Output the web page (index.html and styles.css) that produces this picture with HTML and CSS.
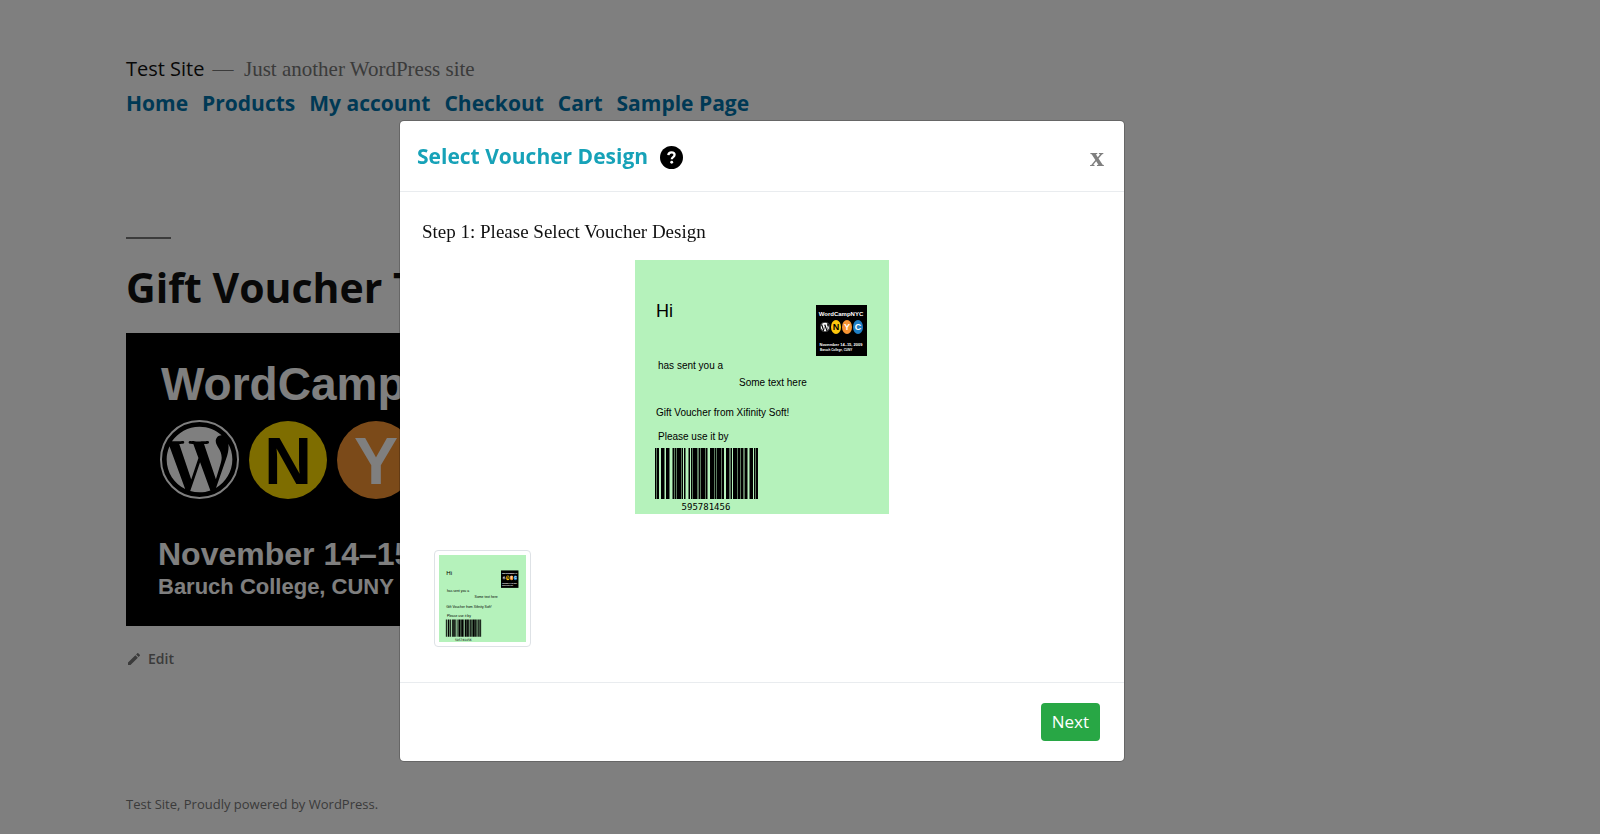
FILE: index.html
```
<!DOCTYPE html>
<html lang="en">
<head>
<meta charset="UTF-8">
<meta name="viewport" content="width=device-width, initial-scale=1">
<title>Gift Voucher Test - Test Site</title>
<link rel="stylesheet" href="styles.css">
</head>
<body>

<svg class="defs" aria-hidden="true">
	<symbol id="wp" viewBox="0 0 24 24">
		<circle cx="12" cy="12" r="11.7" fill="none" stroke="#fff" stroke-width=".6"/>
		<path fill="#fff" transform="translate(.9 .9) scale(.925)" d="M21.469 6.825c.84 1.537 1.318 3.3 1.318 5.175 0 3.979-2.156 7.456-5.363 9.325l3.295-9.527c.615-1.54.82-2.771.82-3.864 0-.405-.026-.78-.07-1.11m-7.981.105c.647-.03 1.232-.105 1.232-.105.582-.075.514-.93-.067-.899 0 0-1.755.135-2.88.135-1.064 0-2.85-.15-2.85-.15-.585-.03-.661.855-.075.885 0 0 .54.061 1.125.09l1.68 4.605-2.37 7.08L5.354 6.9c.649-.03 1.234-.1 1.234-.1.585-.075.516-.93-.065-.896 0 0-1.746.138-2.874.138-.2 0-.438-.008-.69-.015C4.911 3.15 8.235 1.215 12 1.215c2.809 0 5.365 1.072 7.286 2.833-.046-.003-.091-.009-.141-.009-1.06 0-1.812.923-1.812 1.914 0 .89.513 1.643 1.06 2.531.411.72.89 1.643.89 2.977 0 .915-.354 1.994-.821 3.479l-1.075 3.585-3.9-11.61zM12 22.784c-1.059 0-2.081-.153-3.048-.437l3.237-9.406 3.315 9.087c.024.053.05.101.078.149-1.12.393-2.325.609-3.582.609M1.211 12c0-1.564.336-3.05.935-4.39L7.29 21.709C3.694 19.96 1.212 16.271 1.211 12"/>
	</symbol>

	<!-- voucher design, used for the preview and the thumbnail -->
	<symbol id="voucher" viewBox="0 0 254 254">
		<rect width="254" height="254" fill="#b5f2bb"/>
		<g class="v-text">
			<text class="v-name" x="21" y="57">Hi</text>
			<text x="23" y="109">has sent you a</text>
			<text x="104" y="126">Some text here</text>
			<text x="21" y="156">Gift Voucher from Xifinity Soft!</text>
			<text x="23" y="180">Please use it by</text>
		</g>
		<rect x="181" y="45" width="51" height="51"/>
		<g class="v-logo">
			<text x="206" y="56" font-size="6">WordCampNYC</text>
			<text x="206" y="86" font-size="4">November 14–15, 2009</text>
			<text class="v-place" x="185" y="91" font-size="3">Baruch College, CUNY</text>
		</g>
		<use href="#wp" x="185" y="62" width="10" height="10"/>
		<ellipse cx="201" cy="67" rx="5" ry="7" fill="#fdc70c"/>
		<ellipse cx="212" cy="67" rx="5" ry="7" fill="#f79433"/>
		<ellipse cx="223" cy="67" rx="5" ry="7" fill="#1f7fc4"/>
		<g class="v-logo" font-size="9">
			<text class="dark" x="201" y="70">N</text>
			<text x="212" y="70">Y</text>
			<text x="223" y="70">C</text>
		</g>
		<path d="M20 188h1.500v51h-1.500zM22 188h2v51h-2zM26 188h3.500v51h-3.500zM31 188h3.500v51h-3.500zM37.500 188h1.500v51h-1.500zM39.500 188h2v51h-2zM42 188h4v51h-4zM46.500 188h1.500v51h-1.500zM49 188h1.500v51h-1.500zM53.500 188h1.500v51h-1.500zM56 188h1.500v51h-1.500zM58 188h4.500v51h-4.500zM63.500 188h2v51h-2zM66 188h4.500v51h-4.500zM71 188h1.500v51h-1.500zM75 188h4.500v51h-4.500zM80 188h1.500v51h-1.500zM82 188h4.500v51h-4.500zM87 188h2v51h-2zM91 188h3.500v51h-3.500zM95.500 188h1.500v51h-1.500zM98 188h4.500v51h-4.500zM103 188h2v51h-2zM105.500 188h3v51h-3zM109.500 188h3v51h-3zM114.500 188h3.500v51h-3.500zM119 188h1.500v51h-1.500zM121 188h2v51h-2z"/>
		<text class="v-code" x="71" y="250">595781456</text>
	</symbol>
</svg>

<div id="page">
	<header class="site-header">
		<div class="site-branding">
			<p class="site-title"><a href="#">Test Site</a></p>
			<p class="site-description">—&nbsp; Just another WordPress site</p>
		</div>
		<nav class="main-navigation">
			<a href="#">Home</a>
			<a href="#">Products</a>
			<a href="#">My account</a>
			<a href="#">Checkout</a>
			<a href="#">Cart</a>
			<a href="#">Sample Page</a>
		</nav>
	</header>

	<main>
		<h1 class="entry-title">Gift Voucher Test</h1>
		<svg class="banner" viewBox="0 0 412 293" role="img" aria-label="WordCampNYC">
			<rect width="412" height="293"/>
			<g class="banner-text">
				<text x="35" y="67" font-size="46">WordCampNYC</text>
				<text x="32" y="232" font-size="32">November 14–15, 2009</text>
				<text x="32" y="261" font-size="22">Baruch College, CUNY</text>
			</g>
			<use href="#wp" x="34" y="87" width="79" height="79"/>
			<circle cx="162" cy="127" r="39" fill="#fddb00"/>
			<circle cx="250" cy="127" r="39" fill="#f79433"/>
			<circle cx="339" cy="127" r="39" fill="#1f7fc4"/>
			<g class="banner-round">
				<text class="dark" x="162" y="151">N</text>
				<text x="250" y="151">Y</text>
				<text x="339" y="151">C</text>
			</g>
		</svg>
		<a class="edit-link" href="#">
			<svg viewBox="0 0 24 24" width="16" height="16"><path fill="currentColor" d="M3 17.25V21h3.75L17.81 9.94l-3.75-3.75L3 17.25zM20.71 7.04a1 1 0 0 0 0-1.41l-2.34-2.34a1 1 0 0 0-1.41 0l-1.83 1.83 3.75 3.75 1.83-1.83z"/></svg>
			Edit
		</a>
	</main>

	<footer class="site-footer">
		<a href="#">Test Site</a>, <a href="#">Proudly powered by WordPress.</a>
	</footer>
</div>

<div class="modal-backdrop">
	<div class="modal" role="dialog" aria-modal="true" aria-labelledby="modal-title">
		<div class="modal-header">
			<h2 id="modal-title">Select Voucher Design</h2>
			<svg class="help" viewBox="0 0 24 24" width="23" height="23">
				<circle cx="12" cy="12" r="12"/>
				<path d="M8.7 9.4C8.9 7.5 10.2 6.6 12 6.6c1.9 0 3.2 1 3.2 2.6 0 2.4-2.9 2.3-2.9 4.5" fill="none" stroke="#fff" stroke-width="2.4"/>
				<circle cx="12.2" cy="17" r="1.5" fill="#fff"/>
			</svg>
			<button type="button" class="close" aria-label="Close">x</button>
		</div>
		<div class="modal-body">
			<p>Step 1: Please Select Voucher Design</p>
			<svg class="preview" viewBox="0 0 254 254"><use href="#voucher"/></svg>
			<button type="button" class="thumb" aria-label="Voucher design 1">
				<svg viewBox="0 0 254 254"><use href="#voucher"/></svg>
			</button>
		</div>
		<div class="modal-footer">
			<button type="button" class="btn-next">Next</button>
		</div>
	</div>
</div>

</body>
</html>
```
FILE: styles.css
```
* {
	box-sizing: border-box;
}

body {
	margin: 0;
	background: #fff;
	color: #111;
	font-family: "Open Sans", "Noto Sans", sans-serif;
	font-size: 21px;
}

a {
	text-decoration: none;
}

p, h1, h2 {
	margin: 0;
}

.defs {
	display: none;
}

#page {
	padding: 53px 126px 0;
}

/* header */
.site-branding {
	display: flex;
	align-items: baseline;
	gap: 8px;
	line-height: 32px;
}

.site-title {
	font-size: 20px;
}

.site-title a {
	color: #111;
}

.site-description {
	color: #767676;
	font-family: "Liberation Serif", serif;
}

.main-navigation {
	display: flex;
	gap: 14px;
	line-height: 36px;
	font-weight: 700;
}

.main-navigation a {
	color: #0073aa;
}

/* content */
.entry-title {
	margin-top: 116px;
	font-size: 41px;
	line-height: 60px;
}

.entry-title:before {
	content: "";
	display: block;
	width: 45px;
	height: 2px;
	margin-bottom: 18px;
	background: #767676;
}

.banner {
	display: block;
	width: 412px;
	margin-top: 16px;
}

.banner-text {
	fill: #fff;
	font-family: "Liberation Sans", Arial, sans-serif;
	font-weight: 700;
}

.banner-round {
	fill: #fff;
	font-family: "Liberation Sans", Arial, sans-serif;
	font-size: 66px;
	font-weight: 700;
	text-anchor: middle;
}

.dark {
	fill: #000;
}

.edit-link {
	display: flex;
	align-items: center;
	gap: 6px;
	margin-top: 21px;
	color: #767676;
	font-size: 14px;
	font-weight: 600;
	line-height: 24px;
}

.site-footer {
	margin-top: 121px;
	color: #767676;
	font-size: 13px;
	line-height: 24px;
}

.site-footer a {
	color: #767676;
}

/* modal */
.modal-backdrop {
	position: fixed;
	inset: 0;
	padding: 120px 0 0 25%;
	background: rgba(0, 0, 0, .5);
}

.modal {
	width: 726px;
	max-width: 95%;
	background: #fff;
	background-clip: padding-box;
	border: 1px solid rgba(0, 0, 0, .2);
	border-radius: 5px;
	margin-left: -1px;
}

.modal-header {
	display: flex;
	align-items: center;
	height: 71px;
	padding: 0 20px 0 17px;
	border-bottom: 1px solid #e9ecef;
}

.modal-header h2 {
	color: #17a2b8;
	font-size: 21px;
}

.help {
	margin: 2px 0 0 12px;
}

.close {
	margin: 2px 0 0 auto;
	padding: 0;
	border: 0;
	background: none;
	color: #7f7f7f;
	font: 700 28px "Liberation Serif", serif;
}

.modal-body {
	padding: 24px 22px 35px;
}

.modal-body p {
	font-family: "Liberation Serif", serif;
	font-size: 19px;
	line-height: 32px;
}

.preview {
	display: block;
	width: 254px;
	margin: 12px auto 36px;
}

.thumb {
	display: block;
	width: 97px;
	margin-left: 12px;
	padding: 4px;
	border: 1px solid #dee2e6;
	border-radius: 4px;
	background: #fff;
}

.thumb svg {
	display: block;
}

.v-text {
	font: 10px "Liberation Sans", Arial, sans-serif;
}

.v-name {
	font-size: 18px;
}

.v-logo {
	fill: #fff;
	font-family: "Liberation Sans", Arial, sans-serif;
	font-weight: 700;
	text-anchor: middle;
}

.v-logo .dark {
	fill: #000;
}

.v-place {
	text-anchor: start;
}

.v-code {
	font: 9px "DejaVu Sans Mono", monospace;
	text-anchor: middle;
}

.modal-footer {
	display: flex;
	justify-content: flex-end;
	padding: 20px 24px;
	border-top: 1px solid #e9ecef;
}

.btn-next {
	padding: 0 11px;
	border: 0;
	border-radius: 4px;
	background: #28a745;
	color: #fff;
	font: 17px/38px "Open Sans", "Noto Sans", sans-serif;
}
```
